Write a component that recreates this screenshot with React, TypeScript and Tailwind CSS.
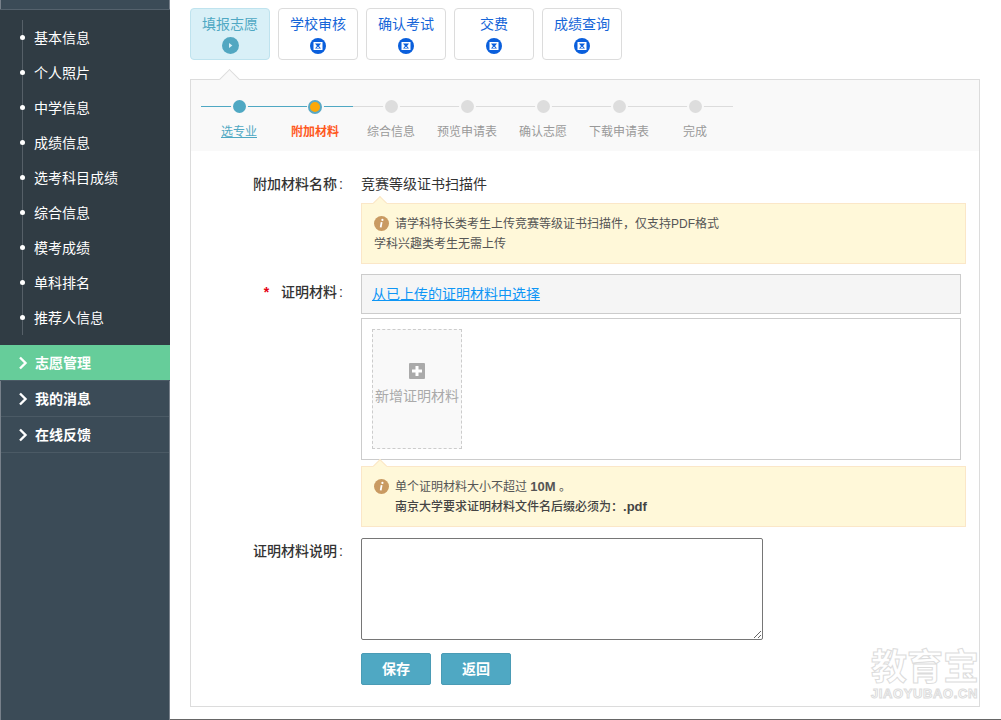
import type { ReactNode } from 'react';

const subMenu = ['基本信息', '个人照片', '中学信息', '成绩信息', '选考科目成绩', '综合信息', '模考成绩', '单科排名', '推荐人信息'];
const tabs = ['学校审核', '确认考试', '交费', '成绩查询'];
const steps = ['选专业', '附加材料', '综合信息', '预览申请表', '确认志愿', '下载申请表', '完成'];

function Chevron() {
  return (
    <svg width="10" height="14" viewBox="0 0 10 14" className="shrink-0">
      <path d="M2 1.5 7.5 7 2 12.5" fill="none" stroke="#fff" strokeWidth="2.4" />
    </svg>
  );
}

function Hourglass() {
  return (
    <svg width="16" height="16" viewBox="0 0 16 16" className="block">
      <circle cx="8" cy="8" r="8" fill="#0a5fdc" />
      <rect x="3.5" y="4" width="9" height="8" fill="#fff" />
      <path d="M5 5.5h6L9 8l2 2.5H5L7 8z" fill="#0a5fdc" />
      <path d="M6.7 10 8 8.6 9.3 10z" fill="#fff" />
    </svg>
  );
}

function InfoIcon() {
  return (
    <svg width="15" height="15" viewBox="0 0 15 15" className="shrink-0">
      <circle cx="7.5" cy="7.5" r="7.5" fill="#c99a62" />
      <circle cx="8.4" cy="3.9" r="1.1" fill="#fff" />
      <path d="M7.6 6.1 6.7 11.4" stroke="#fff" strokeWidth="1.8" />
    </svg>
  );
}

function Tip({ children }: { children: ReactNode }) {
  return (
    <div className="relative border border-[#fbe7c8] bg-[#fff8d9] text-xs text-[#555] px-3 py-[9px] leading-[20px]">
      <span className="absolute -top-[6px] left-[13px] w-[10px] h-[10px] rotate-45 border-l border-t border-[#fbe7c8] bg-[#fff8d9]" />
      {children}
    </div>
  );
}

function Row({ label, required, className, children }: { label: string; required?: boolean; className?: string; children: ReactNode }) {
  return (
    <div className={`flex ${className ?? ''}`}>
      <div className="w-[152px] shrink-0 text-right text-sm font-medium text-[#333] leading-[20px]">
        {required && <b className="text-[#e60012] mr-[12px]">*</b>}
        {label}<span className="ml-[2px]">:</span>
      </div>
      <div className="ml-[18px] flex-1 min-w-0">{children}</div>
    </div>
  );
}

export default function App() {
  return (
    <div className="relative w-[1001px] h-[720px] flex overflow-hidden bg-white font-['Liberation_Sans','Noto_Sans_CJK_SC',sans-serif]">
      {/* Sidebar */}
      <aside className="w-[170px] shrink-0 bg-[#3b4b57] border-x border-[#77808a] flex flex-col">
        <div className="h-[10px] border-b border-[#55626d] -mx-px" />
        <div className="-mx-px bg-[#303c44] h-[335px] pt-[10px]">
          <ul className="relative ml-[22px] h-[315px] border-l border-[#566068]">
            {subMenu.map((name) => (
              <li key={name} className="relative h-[35px] flex items-center pl-[11px] text-sm text-white">
                <span className="absolute -left-[3px] w-[5px] h-[5px] rounded-full bg-white" />
                {name}
              </li>
            ))}
          </ul>
        </div>
        <div className="-mx-px h-[36px] border-b border-[#4b5a65] bg-[#66cd9a] flex items-center gap-[7px] pl-[18px] text-sm font-bold text-white">
          <Chevron />
          志愿管理
        </div>
        {['我的消息', '在线反馈'].map((name) => (
          <div key={name} className="h-[36px] border-b border-[#4b5a65] flex items-center gap-[7px] pl-[17px] text-sm font-bold text-white">
            <Chevron />
            {name}
          </div>
        ))}
      </aside>

      {/* Main */}
      <main className="flex-1 min-w-0 pl-5 pr-[21px] pt-2 border-b border-[#666]">
        <div className="flex gap-2">
          <div className="w-[80px] h-[52px] rounded border border-[#bfe3ee] bg-[#d9f0f7] flex flex-col items-center pt-[5px]">
            <span className="text-sm leading-[20px] text-[#4fa8c3]">填报志愿</span>
            <svg width="17" height="17" viewBox="0 0 17 17" className="mt-[3px]">
              <circle cx="8.5" cy="8.5" r="8.5" fill="#52a7c1" />
              <path d="M7 6 10.4 8.5 7 11z" fill="#d9f0f7" />
            </svg>
          </div>
          {tabs.map((name) => (
            <div key={name} className="w-[80px] h-[52px] rounded border border-[#dcdcdc] bg-white flex flex-col items-center pt-[5px]">
              <span className="text-sm leading-[20px] text-[#1565d8]">{name}</span>
              <span className="mt-[4px]"><Hourglass /></span>
            </div>
          ))}
        </div>

        <section className="relative mt-[19px] h-[628px] border border-[#dcdcdc]">
          <span className="absolute -top-[8px] left-[31px] w-[15px] h-[15px] rotate-45 border-l border-t border-[#dcdcdc] bg-[#f9f9f9]" />

          {/* Steps */}
          <div className="relative h-[71px] bg-[#f9f9f9] pl-[10px] pt-[18px]">
            <div className="flex w-[532px]">
              {steps.map((name, i) => (
                <div key={name} className="relative w-[76px] h-[52px] flex flex-col items-center">
                  <div className={`absolute top-[8px] left-0 right-0 h-px ${i < 2 ? 'bg-[#4fa8c3]' : 'bg-[#dcdcdc]'}`} />
                  <div className="relative z-10 w-[17px] h-[17px] flex items-center justify-center rounded-full bg-[#f9f9f9]">
                    {i === 0 && <span className="w-[13px] h-[13px] rounded-full bg-[#4fa8c3]" />}
                    {i === 1 && <span className="w-[14px] h-[14px] rounded-full border-2 border-[#5aa8c4] bg-[#fba808]" />}
                    {i > 1 && <span className="w-[13px] h-[13px] rounded-full bg-[#dddddd]" />}
                  </div>
                  <span
                    className={`mt-[9px] text-xs leading-[16px] whitespace-nowrap ${
                      i === 0 ? 'text-[#4fa8c3] underline' : i === 1 ? 'text-[#ff5a1f] font-bold' : 'text-[#999]'
                    }`}
                  >
                    {name}
                  </span>
                </div>
              ))}
            </div>
          </div>

          {/* Form */}
          <div className="pt-[23px]">
            <Row label="附加材料名称">
              <div className="text-sm leading-[20px] text-[#333]">竞赛等级证书扫描件</div>
              <div className="mt-[9px] mr-[13px]">
                <Tip>
                  <div className="h-[21px] flex items-center gap-[6px]">
                    <InfoIcon />
                    <span>请学科特长类考生上传竞赛等级证书扫描件，仅支持PDF格式</span>
                  </div>
                  <div>学科兴趣类考生无需上传</div>
                </Tip>
              </div>
            </Row>

            <Row label="证明材料" required className="mt-[10px] [&>div:first-child]:pt-[8px]">
              <div className="mr-[18px] h-[40px] border border-[#ccc] bg-[#f5f5f5] pl-[10px] flex items-center text-sm text-[#0e96f5] underline">
                从已上传的证明材料中选择
              </div>
              <div className="mr-[18px] mt-[4px] h-[142px] border border-[#ccc] p-[10px]">
                <div className="w-[90px] h-[120px] border border-dashed border-[#ccc] bg-[#f9f9f9] flex flex-col items-center pt-[33px]">
                  <svg width="16" height="16" viewBox="0 0 16 16" className="shrink-0">
                    <rect width="16" height="16" rx="1" fill="#aaa" />
                    <path d="M8 3v10M3 8h10" stroke="#fff" strokeWidth="3" />
                  </svg>
                  <span className="mt-[7px] text-sm leading-[20px] whitespace-nowrap text-[#aaa]">新增证明材料</span>
                </div>
              </div>
              <div className="mt-[6px] mr-[13px]">
                <Tip>
                  <div className="h-[21px] flex items-center gap-[6px]">
                    <InfoIcon />
                    <span className="pt-px">单个证明材料大小不超过 <b className="text-[13px]">10M</b> 。</span>
                  </div>
                  <div className="pl-[21px] font-medium text-[#444]">南京大学要求证明材料文件名后缀必须为：<b className="text-[13px]">.pdf</b></div>
                </Tip>
              </div>
            </Row>

            <Row label="证明材料说明" className="mt-[11px] [&>div:first-child]:pt-[3px]">
              <textarea className="block w-[402px] h-[102px] border border-[#767676] rounded-[2px]" />
              <div className="mt-[13px] flex gap-[10px]">
                <button className="w-[70px] h-[32px] rounded-[2px] border border-[#4a9bb5] bg-[#4fa8c3] text-sm font-bold text-white">保存</button>
                <button className="w-[70px] h-[32px] rounded-[2px] border border-[#4a9bb5] bg-[#4fa8c3] text-sm font-bold text-white">返回</button>
              </div>
            </Row>
          </div>

          {/* Watermark */}
          <div className="absolute right-0 bottom-[6px] w-[108px] text-white whitespace-nowrap [-webkit-text-stroke:1px_#dcdcdc]">
            <div className="text-[36px] leading-[38px] font-bold">教育宝</div>
            <div className="text-[13px] leading-[13px] font-bold tracking-[0.6px]">JIAOYUBAO.CN</div>
          </div>
        </section>
      </main>
    </div>
  );
}
